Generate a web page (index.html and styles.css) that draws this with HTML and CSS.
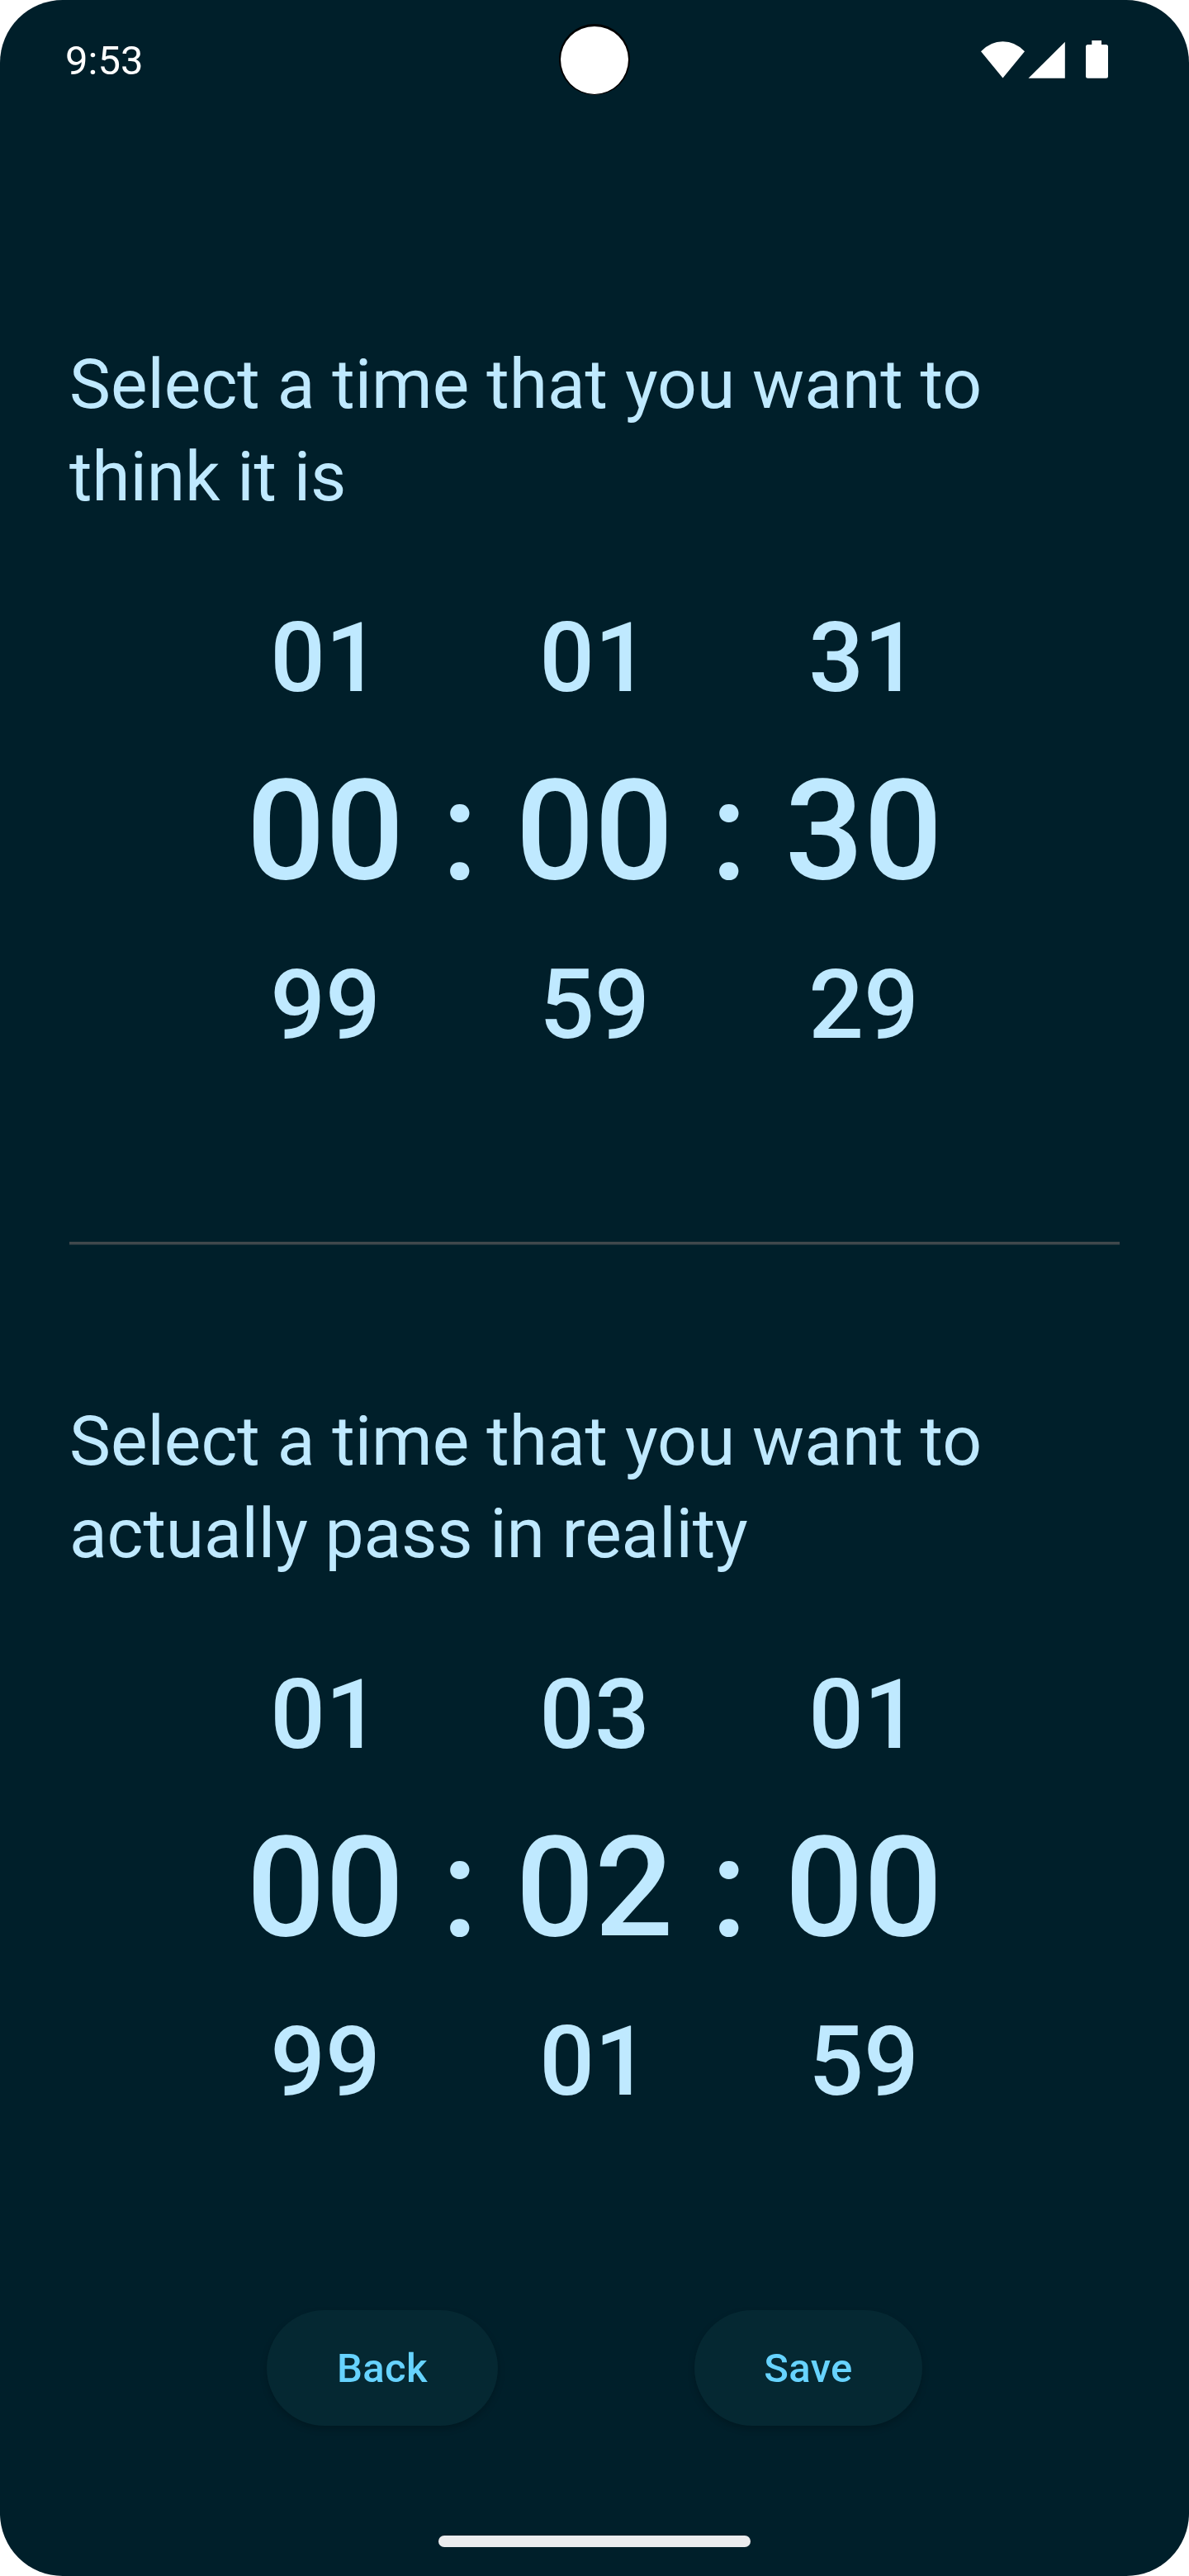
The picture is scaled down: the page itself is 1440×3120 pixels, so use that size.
FILE: index.html
```html
<!DOCTYPE html>
<html lang="en">
<head>
<meta charset="utf-8">
<title>Time picker</title>
<link rel="stylesheet" href="styles.css">
</head>
<body>
<main class="screen">
  <header class="status">
    <span class="clock">9:53</span>
    <span class="camera"></span>
    <svg class="icons" width="154" height="46" viewBox="0 0 154 46">
      <path d="M0 13.2Q11.500 1.200 26.500 1.200T53 13.200L26.500 45.500Z"/>
      <path d="M101.800 1.800V45.700H57.500Z"/>
      <path d="M134.300 0h11.700v5h5.500q2.500 0 2.500 2.500v35.700q0 2.500-2.500 2.500h-22q-2.500 0-2.500-2.500V7.500q0-2.500 2.500-2.500h4.800Z"/>
    </svg>
  </header>
  <section class="block">
    <h1 class="title">Select a time that you want to<br><span class="second">think it is</span></h1>
    <div class="picker">
      <div class="wheel"><span class="side">01</span><span class="main">00</span><span class="side">99</span></div>
      <span class="colon">:</span>
      <div class="wheel"><span class="side">01</span><span class="main">00</span><span class="side">59</span></div>
      <span class="colon">:</span>
      <div class="wheel"><span class="side">31</span><span class="main">30</span><span class="side">29</span></div>
    </div>
  </section>
  <hr class="divider">
  <section class="block">
    <h1 class="title">Select a time that you want to<br><span class="second">actually pass in reality</span></h1>
    <div class="picker">
      <div class="wheel"><span class="side">01</span><span class="main">00</span><span class="side">99</span></div>
      <span class="colon">:</span>
      <div class="wheel"><span class="side">03</span><span class="main">02</span><span class="side">01</span></div>
      <span class="colon">:</span>
      <div class="wheel"><span class="side">01</span><span class="main">00</span><span class="side">59</span></div>
    </div>
  </section>
  <div class="actions">
    <button class="btn back">Back</button>
    <button class="btn save">Save</button>
  </div>
  <div class="handle"></div>
</main>
</body>
</html>
```
FILE: styles.css
```css
body { margin: 0; background: #fff; font-family: Roboto, sans-serif; }

.screen {
  box-sizing: border-box;
  width: 1440px;
  height: 3120px;
  border-radius: 76px;
  background: #001f2a;
  color: #bfe9ff;
  overflow: hidden;
  display: flex;
  flex-direction: column;
}

/* Status bar */
.status {
  height: 144px;
  margin-bottom: 84px;
  flex: none;
  display: grid;
  grid-template-columns: 1fr 86px 1fr;
  align-items: center;
  padding: 0 98px 0 78px;
  color: #fff;
}
.clock { font-size: 49px; line-height: 58px; padding: 3px 0 0 1px; }
.camera {
  box-sizing: border-box;
  width: 86px;
  height: 86px;
  border: 2px solid #000;
  border-top-width: 3px;
  border-bottom-width: 1px;
  border-radius: 50%;
  background: #fff;
  margin-left: 10px;
}
.icons { justify-self: end; fill: #fff; }

/* Time selection */
.block { height: 1276px; flex: none; box-sizing: border-box; padding: 182px 84px 0; }
.divider {
  box-sizing: border-box;
  margin: 0 84px;
  height: 4px;
  flex: none;
  border: 0;
  border-bottom: 1px solid #20333b;
  background: #40484c;
}
.title { margin: 0; font-weight: 400; font-size: 84px; line-height: 112px; }
.second { letter-spacing: -0.12px; }
.picker { display: flex; justify-content: center; align-items: center; margin-top: 58px; }
.wheel { width: 196px; display: flex; flex-direction: column; align-items: center; font-weight: 500; }
.side { height: 210px; line-height: 210px; font-size: 117.6px; }
.main { height: 210px; line-height: 210px; font-size: 168px; }
.colon { width: 130px; text-align: center; font-size: 168px; font-weight: 500; }

/* Bottom buttons */
.actions { display: flex; justify-content: center; gap: 238px; margin-top: 14px; }
.btn {
  height: 140px;
  padding: 0;
  border: 0;
  border-radius: 70px;
  background: #052832;
  box-shadow: 0 4px 8px rgba(0, 0, 0, .2);
  color: #67d3ff;
  font: 500 49px Roboto, sans-serif;
  letter-spacing: .35px;
}
.back { width: 280px; }
.save { width: 276px; }

.handle { width: 378px; height: 14px; border-radius: 7px; background: #ebecee; margin: auto auto 35px; }
```
